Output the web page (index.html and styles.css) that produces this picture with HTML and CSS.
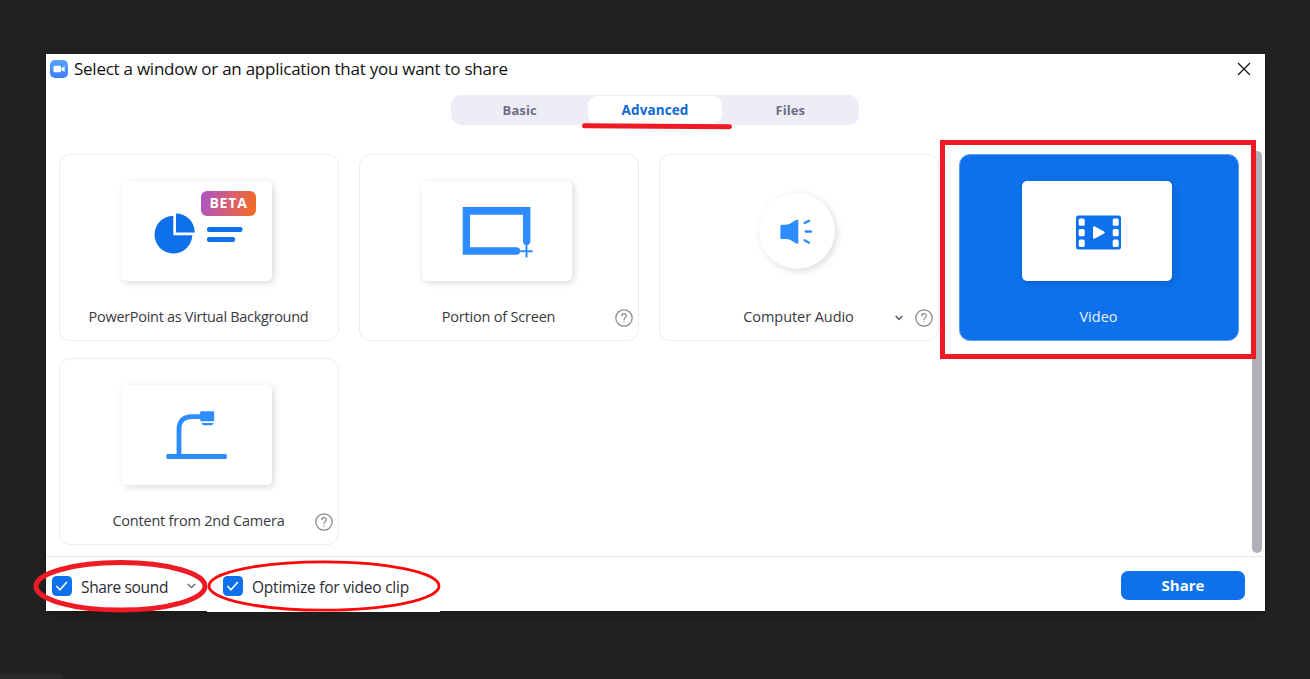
FILE: index.html
```html
<!DOCTYPE html>
<html lang="en">
<head>
<meta charset="utf-8">
<title>Select a window or an application that you want to share</title>
<link rel="stylesheet" href="styles.css">
</head>
<body>
<main class="dialog">
  <header class="titlebar">
    <svg class="app-icon" width="18" height="18" viewBox="0 0 18 18"><defs><linearGradient id="app" x1="0" y1="0" x2="0" y2="1"><stop offset="0" stop-color="#5aa3ff"/><stop offset="1" stop-color="#3d7bfa"/></linearGradient></defs><rect width="18" height="18" rx="5" fill="url(#app)"/><rect x="3.4" y="5.8" width="7.8" height="6.5" rx="1.600" fill="#fff"/><path d="M11.8 8l2.8-1.9v6l-2.8-1.9z" fill="#fff"/></svg>
    <h1 class="title">Select a window or an application that you want to share</h1>
    <svg class="close" width="14" height="14" viewBox="0 0 14 14"><path d="M1 1l12 12M13 1L1 13" stroke="#111" stroke-width="1.200"/></svg>
  </header>
  <nav class="tabs">
    <span class="tab">Basic</span>
    <span class="tab tab-active">Advanced</span>
    <span class="tab">Files</span>
  </nav>
  <section class="content">
    <div class="grid">
      <article class="card">
        <div class="thumb">
          <svg width="150" height="100" viewBox="0 0 150 100"><path d="M51.300 34.800A18.900 18.900 0 1 0 70.300 54.200H51.300z" fill="#0e71eb"/><path d="M54 32.500A18.700 18.700 0 0 1 72.700 51.400H54z" fill="#0e71eb"/><rect x="85" y="46" width="35.500" height="5" rx="2" fill="#0e71eb"/><rect x="85" y="56" width="28" height="5" rx="2" fill="#0e71eb"/></svg>
          <span class="beta">BETA</span>
        </div>
        <p class="label label-ppt">PowerPoint as Virtual Background</p>
      </article>
      <article class="card">
        <div class="thumb">
          <svg width="150" height="100" viewBox="0 0 150 100"><path d="M40.700 26H108.400V60.200a3.600 3.600 0 0 1-7.400 0V33.700H48V66.300H94.500a3.700 3.700 0 0 1 0 7.400H40.700z" fill="#2d8cff"/><path d="M104.500 63.500V76.500M98.200 70.200H110.700" stroke="#2d8cff" stroke-width="2"/></svg>
        </div>
        <p class="label label-portion">Portion of Screen</p>
        <svg class="help" width="18" height="18" viewBox="0 0 18 18"><circle cx="9" cy="9" r="8.200"/><path d="M6.800 7.200C6.800 3.700 11.400 3.800 11.300 6.800C11.200 8.400 9 8.500 9 11"/><path d="M9 12.300v1.300"/></svg>
      </article>
      <article class="card">
        <div class="disc">
          <svg width="76" height="76" viewBox="0 0 76 76"><path d="M22.500 31.800H27C31 31.800 35.500 27.200 38 26.800Q39.300 26.500 39.300 28V49.500Q39.300 51.500 37.500 50.500C34.500 49 31.500 46 27 46H22.500Q21.400 46 21.400 44.500V33.500Q21.400 31.800 22.500 31.800z" fill="#2d8cff"/><path d="M45.700 29.900l4.400-2M46.700 38.500h5.200M45.700 47.200l4.200 2.500" stroke="#2d8cff" stroke-width="2.400" stroke-linecap="round"/></svg>
        </div>
        <p class="label label-audio">Computer Audio</p>
        <svg class="chevron" width="8" height="6" viewBox="0 0 8 6"><path d="M.7 1L4 4.300 7.300 1"/></svg>
        <svg class="help" width="18" height="18" viewBox="0 0 18 18"><circle cx="9" cy="9" r="8.200"/><path d="M6.800 7.200C6.800 3.700 11.400 3.800 11.300 6.800C11.200 8.400 9 8.500 9 11"/><path d="M9 12.300v1.300"/></svg>
      </article>
      <article class="card card-selected">
        <div class="thumb">
          <svg width="150" height="100" viewBox="0 0 150 100"><rect x="54" y="34.500" width="45" height="34" rx="2.500" fill="#0e71eb"/><g fill="#fff"><rect x="56.700" y="37.500" width="6" height="7.300" rx="1.500"/><rect x="56.700" y="48" width="6" height="7.300" rx="1.500"/><rect x="56.700" y="58.600" width="6" height="7.300" rx="1.500"/><rect x="90.700" y="37.500" width="6" height="7.300" rx="1.500"/><rect x="90.700" y="48" width="6" height="7.300" rx="1.500"/><rect x="90.700" y="58.600" width="6" height="7.300" rx="1.500"/><path d="M71 46.500Q71 44.500 73 45.500L82 50.500Q83.800 51.500 82 52.500L73 57.500Q71 58.500 71 56.500z"/></g></svg>
        </div>
        <p class="label label-video">Video</p>
      </article>
      <article class="card">
        <div class="thumb">
          <svg width="150" height="100" viewBox="0 0 150 100"><path d="M57 70V44.500Q57 31.700 70 31.700H80" fill="none" stroke="#2d8cff" stroke-width="4.800"/><rect x="44.300" y="69" width="60.500" height="5" rx="1.500" fill="#2d8cff"/><rect x="78.200" y="26.300" width="14" height="10" rx="1.200" fill="#2d8cff"/><path d="M79.500 38H91.500Q91 40.300 89 40.300H82Q80 40.300 79.500 38z" fill="#2d8cff"/></svg>
        </div>
        <p class="label label-camera">Content from 2nd Camera</p>
        <svg class="help" width="18" height="18" viewBox="0 0 18 18"><circle cx="9" cy="9" r="8.200"/><path d="M6.800 7.200C6.800 3.700 11.400 3.800 11.300 6.800C11.200 8.400 9 8.500 9 11"/><path d="M9 12.300v1.300"/></svg>
      </article>
    </div>
    <div class="scroll-thumb"></div>
  </section>
  <footer class="footer">
    <label class="option option-sound">
      <svg width="20" height="20" viewBox="0 0 20 20"><rect width="20" height="20" rx="4.500" fill="#0e71eb"/><path d="M4.400 10.100l3.500 3.700 7-7.800" fill="none" stroke="#fff" stroke-width="1.500"/></svg>
      <span class="option-text sound-text">Share sound</span>
      <svg class="sound-chevron" width="9" height="6" viewBox="0 0 9 6"><path d="M.8 1L4.500 4.600 8.200 1"/></svg>
    </label>
    <label class="option option-video">
      <svg width="20" height="20" viewBox="0 0 20 20"><rect width="20" height="20" rx="4.500" fill="#0e71eb"/><path d="M4.400 10.100l3.500 3.700 7-7.800" fill="none" stroke="#fff" stroke-width="1.500"/></svg>
      <span class="option-text video-text">Optimize for video clip</span>
    </label>
    <button class="share">Share</button>
  </footer>
</main>
<svg class="marks" width="1310" height="679" viewBox="0 0 1310 679">
  <rect x="207" y="611" width="233" height="1" fill="#fff"/>
  <path d="M584.500 125.700L729.500 126.800" stroke="#ee1b24" stroke-width="5" stroke-linecap="round"/>
  <rect x="942.500" y="142.500" width="311" height="214" stroke="#ee1b24" stroke-width="5"/>
  <ellipse cx="120.500" cy="586.300" rx="84.500" ry="23.800" stroke="#ee1b24" stroke-width="5"/>
  <ellipse cx="324" cy="586" rx="115" ry="24.200" stroke="#fb0808" stroke-width="2.800"/>
</svg>
<div class="corner-shade"></div>
</body>
</html>
```
FILE: styles.css
```css
* { box-sizing: border-box; }
body {
  margin: 0;
  height: 679px;
  padding: 54px 45px 0 46px;
  overflow: hidden;
  background: #222;
  font-family: "Open Sans", "Noto Sans", sans-serif;
}
svg { display: block; flex: none; }
.dialog {
  display: flex;
  flex-direction: column;
  height: 557px;
  background: #fff;
  box-shadow: 0 3px 10px rgba(0, 0, 0, .3);
}
.titlebar {
  display: flex;
  align-items: center;
  height: 30px;
  padding: 0 14px 0 4px;
}
.title {
  margin: 0 auto 0 6px;
  padding-bottom: 2px;
  color: #111;
  font-size: 17px;
  font-weight: 400;
  white-space: nowrap;
  letter-spacing: -.25px;
}
.tabs {
  display: grid;
  grid-template-columns: repeat(3, 1fr);
  width: 408px;
  height: 30px;
  margin: 11px 0 0 405px;
  padding: 1px;
  border-radius: 10px;
  background: #ededf5;
}
.tab {
  display: flex;
  align-items: center;
  justify-content: center;
  color: #6e6e86;
  font-size: 13px;
  font-weight: 700;
  letter-spacing: .1px;
}
.tab-active {
  margin: 0 1px;
  border-radius: 9px;
  background: #fff;
  color: #0e68d8;
  font-size: 13.5px;
}
.content {
  display: flex;
  flex: none;
  justify-content: space-between;
  height: 431px;
  padding: 26px 3px 3px 13px;
}
.grid {
  display: grid;
  grid-template-columns: repeat(4, 280px);
  grid-auto-rows: 187px;
  gap: 17px 20px;
  padding-top: 3px;
  align-content: start;
}
.card {
  position: relative;
  display: flex;
  flex-direction: column;
  align-items: center;
  padding: 26px 4px 0 0;
  border: 1px solid #ededf0;
  border-radius: 11px;
}
.card-selected {
  border-color: #5a9ef2;
  background: #0e71eb;
}
.thumb {
  position: relative;
  width: 150px;
  height: 100px;
  border-radius: 5px;
  background: #fff;
  box-shadow: 2px 2px 7px rgba(0, 0, 0, .15);
}
.disc {
  width: 76px;
  height: 76px;
  margin: 12px 0;
  border-radius: 50%;
  background: #fff;
  box-shadow: 2px 2px 7px rgba(0, 0, 0, .15);
}
.beta {
  position: absolute;
  left: 79px;
  top: 10px;
  width: 55px;
  height: 25px;
  border-radius: 6px;
  background: linear-gradient(100deg, #a855c8, #d65f74 50%, #f36b21);
  color: #fff;
  font-size: 14px;
  font-weight: 700;
  line-height: 24px;
  text-align: center;
  letter-spacing: .8px;
}
.label {
  margin: 26px 0 0 3px;
  color: #39393f;
  font-size: 14.5px;
  line-height: 20px;
  white-space: nowrap;
}
.label-ppt { letter-spacing: -.3px; }
.label-portion { letter-spacing: -.2px; }
.label-audio { letter-spacing: -.07px; }
.label-camera { letter-spacing: -.22px; }
.card-selected .label { color: #e8f2ff; }
.help {
  position: absolute;
  right: 5px;
  bottom: 13px;
  fill: none;
  stroke: #85858c;
  stroke-width: 1.2;
}
.chevron {
  position: absolute;
  right: 35px;
  bottom: 19px;
  fill: none;
  stroke: #5e5e78;
  stroke-width: 1.6;
}
.scroll-thumb {
  width: 10px;
  border-radius: 5px;
  background: #b0b0b8;
}
.footer {
  display: flex;
  flex: none;
  align-items: center;
  height: 55px;
  padding: 4px 20px 0 6px;
  border-top: 1px solid #e8e8ee;
}
.option {
  display: flex;
  align-items: center;
  gap: 9px;
  color: #2b2b35;
  font-size: 15.5px;
  white-space: nowrap;
}
.option-text { padding-top: 2px; }
.sound-text { letter-spacing: -.35px; }
.video-text { letter-spacing: -.22px; }
.option-sound { width: 171px; }
.sound-chevron {
  margin-left: auto;
  margin-right: 27px;
  fill: none;
  stroke: #65656f;
  stroke-width: 1.3;
}
.share {
  width: 124px;
  height: 29px;
  margin: 0 0 2px auto;
  padding: 0;
  border: 0;
  border-radius: 7px;
  background: #0e71eb;
  color: #fff;
  font: 700 15px/29px "Open Sans", sans-serif;
}
.marks {
  position: absolute;
  left: 0;
  top: 0;
  fill: none;
  pointer-events: none;
}
.corner-shade {
  position: absolute;
  left: 0;
  top: 674px;
  width: 63px;
  height: 5px;
  background: #2a2829;
}
```
